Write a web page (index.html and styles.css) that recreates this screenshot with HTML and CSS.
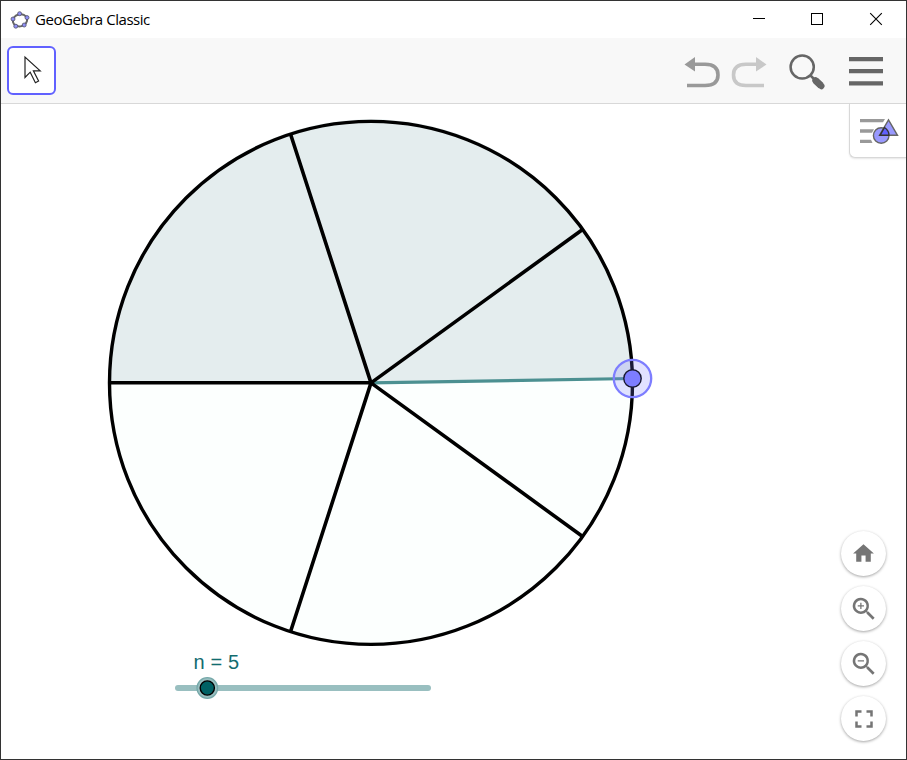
FILE: index.html
```
<!DOCTYPE html>
<html lang="en">
<head>
<meta charset="utf-8">
<title>GeoGebra Classic</title>
<link rel="stylesheet" href="styles.css">
</head>
<body>
<div class="window">
  <header class="titlebar">
    <svg class="app-logo" width="20" height="20" viewBox="10 9 20 20">
      <ellipse cx="20" cy="19.3" rx="7.2" ry="6" fill="none" stroke="#666" stroke-width="2" transform="rotate(-15 20 19.3)"/>
      <g fill="#8f8ff5" stroke="#505068" stroke-width=".8">
        <circle cx="19.6" cy="12.7" r="2"/><circle cx="27" cy="16.6" r="2"/><circle cx="24.2" cy="24" r="2"/><circle cx="15.8" cy="25.2" r="2"/><circle cx="13" cy="18" r="2"/>
      </g>
    </svg>
    <span class="title">GeoGebra Classic</span>
    <div class="controls">
      <svg width="58" height="37" viewBox="730 1 58 37"><path d="M753 18.5h12" stroke="#000"/></svg>
      <svg width="58" height="37" viewBox="788 1 58 37"><rect x="811.5" y="13.5" width="11" height="11" fill="none" stroke="#000"/></svg>
      <svg width="60" height="37" viewBox="846 1 60 37"><path d="M870.2 13.2l11.6 11.6m0-11.6l-11.6 11.6" stroke="#000" stroke-width="1.1"/></svg>
    </div>
  </header>
  <div class="toolbar">
    <button class="tool" aria-label="Move">
      <svg width="45" height="45" viewBox="9 48 45 45"><path d="M25 57v20.5l5.2-5.3 5.2 10.6 3.2-1.7-5.2-10.3h6.8z" fill="#fff" stroke="#222" stroke-width="1.2"/></svg>
    </button>
    <svg class="actions" width="226" height="65" viewBox="680 38 226 65">
      <g fill="none" stroke="#999" stroke-width="3.6">
        <path d="M692 64.3h13c9 0 13 4 13 10.700s-4 10.500-13 10.500h-18"/>
        <path d="M684.500 64.500l10.500-7.500v14.500z" fill="#999" stroke="none"/>
      </g>
      <g fill="none" stroke="#c8c8c8" stroke-width="3.600">
        <path d="M758 64.300h-12c-9 0-12.500 4-12.500 10.700s3.500 10.500 12.500 10.500h18"/>
        <path d="M766.500 64.500l-10.500-7.500v14.500z" fill="#c8c8c8" stroke="none"/>
      </g>
      <circle cx="802.200" cy="67" r="11.600" fill="none" stroke="#666" stroke-width="2.500"/>
      <path d="M810 75l5 5" stroke="#666" stroke-width="2.500"/>
      <path d="M815.300 80.300l5.800 5.500" stroke="#666" stroke-width="7"/>
      <path d="M815.500 80.500l5.800 5.500" stroke="#666" stroke-width="6.400" stroke-linecap="round"/>
      <path d="M849 59.200h34M849 71.200h34M849 83.300h34" stroke="#666" stroke-width="4.200"/>
    </svg>
  </div>
  <main class="graphics">
    <svg class="drawing" width="905" height="655" viewBox="1 104 905 655">
      <circle cx="371" cy="382.900" r="261.500" fill="#fcfffe"/>
      <path d="M371 382.900H109.500A261.500 261.500 0 0 1 632.500 378.500z" fill="#e4edee"/>
      <path d="M371 382.900L632.500 378.500" stroke="#4c9091" stroke-width="3.200"/>
      <circle cx="371" cy="382.900" r="261.500" fill="none" stroke="#000" stroke-width="3.400"/>
      <path d="M371 382.700H109.500M371 382.900L290.500 134M371 382.900L582.600 229.500M371 382.900L582.600 536.500M371 382.900L290.500 631.700" stroke="#000" stroke-width="3.600"/>
      <circle cx="632.500" cy="378.500" r="18.700" fill="#7d7dff" fill-opacity=".22" stroke="#7d7dff" stroke-width="2.300"/>
      <circle cx="632.500" cy="378.500" r="8.700" fill="#7d7dff" stroke="#181830" stroke-width="1.400"/>
      <path d="M178 688h250" stroke="#99bfc0" stroke-width="6" stroke-linecap="round"/>
      <circle cx="207.300" cy="688" r="10.300" fill="#99bfc0" stroke="#75a8a9" stroke-width="1.300"/>
      <circle cx="207.300" cy="688" r="7.100" fill="#006164" stroke="#000" stroke-width="1.400"/>
      <text class="slider-label" x="193.500" y="668.800" textLength="45.500">n = 5</text>
    </svg>
    <button class="style-toggle" aria-label="Style bar">
      <svg width="56" height="52" viewBox="850 104 56 52">
        <path d="M860 117.900h25l-2 3.300h-23zM860 128.300h14l-2 3.400h-12zM860 138.800h11l1.500 3.300h-12.500z" fill="#999"/>
        <circle cx="881.200" cy="134.500" r="7.800" fill="#9999ff" stroke="#666" stroke-width="1.400"/>
        <path d="M888.500 118.800l9 15.500h-18z" fill="#9999ff" stroke="#666" stroke-width="1.400"/>
        <path d="M884.500 126.500c3 2 4.500 4.500 4.500 7.800h-9z" fill="#6060ff" stroke="#333" stroke-width="1.400"/>
      </svg>
    </button>
    <nav class="zoom-controls">
      <button aria-label="Home"><svg class="home" viewBox="0 0 24 24"><path d="M10 20v-6h4v6h5v-8h3L12 3 2 12h3v8z"/></svg></button>
      <button aria-label="Zoom in"><svg viewBox="0 0 24 24"><path d="M15.500 14h-.8l-.3-.3a6.500 6.500 0 1 0-.7.700l.3.300v.8l5 5 1.500-1.500zm-6 0a4.500 4.500 0 1 1 0-9 4.500 4.500 0 0 1 0 9zM12 9h-2V7H9v2H7v1h2v2h1v-2h2z"/></svg></button>
      <button aria-label="Zoom out"><svg viewBox="0 0 24 24"><path d="M15.500 14h-.8l-.3-.3a6.500 6.500 0 1 0-.7.700l.3.300v.8l5 5 1.500-1.500zm-6 0a4.500 4.500 0 1 1 0-9 4.500 4.500 0 0 1 0 9zM7 9h5v1H7z"/></svg></button>
      <button aria-label="Fullscreen"><svg viewBox="0 0 24 24"><path d="M7 14H5v5h5v-2H7zm-2-4h2V7h3V5H5zm12 7h-3v2h5v-5h-2zM14 5v2h3v3h2V5z"/></svg></button>
    </nav>
  </main>
</div>
</body>
</html>
```
FILE: styles.css
```
* { box-sizing: border-box; }
body { margin: 0; }
svg { display: block; }
button { padding: 0; border: 0; background: #fff; }

.window {
  display: flex;
  flex-direction: column;
  width: 907px;
  height: 760px;
  border: 1px solid #333;
  background: #fff;
  overflow: hidden;
}

.titlebar {
  display: flex;
  align-items: center;
  height: 37px;
  padding-left: 9px;
}
.title {
  margin-left: 5px;
  padding-bottom: 2px;
  font: 15px "Open Sans", sans-serif;
  letter-spacing: -0.45px;
  color: #000;
}
.controls { display: flex; margin-left: auto; }

.toolbar {
  display: flex;
  align-items: center;
  justify-content: space-between;
  height: 66px;
  padding-left: 6px;
  background: #f8f8f8;
  border-bottom: 1px solid #d8d8d8;
}
.tool {
  width: 49px;
  height: 49px;
  border: 2px solid #6161ff;
  border-radius: 6px;
  overflow: hidden;
}

.graphics { position: relative; height: 655px; }
.slider-label { font: 20px "Liberation Sans", sans-serif; fill: #126c6f; }

.style-toggle {
  position: absolute;
  top: 0;
  right: 0;
  width: 57px;
  height: 54px;
  border-left: 1px solid #d8d8d8;
  border-bottom: 1px solid #d8d8d8;
  border-bottom-left-radius: 6px;
  box-shadow: 0 1px 2px rgba(0, 0, 0, .1);
}

.zoom-controls {
  position: absolute;
  right: 20px;
  bottom: 18px;
  display: grid;
  gap: 10px;
}
.zoom-controls button {
  display: grid;
  place-items: center;
  width: 45px;
  height: 45px;
  border-radius: 50%;
  box-shadow: 0 1px 3px rgba(0, 0, 0, .36);
}
.zoom-controls svg { width: 30px; height: 30px; fill: #757575; }
.zoom-controls .home { width: 25px; height: 25px; }
```
